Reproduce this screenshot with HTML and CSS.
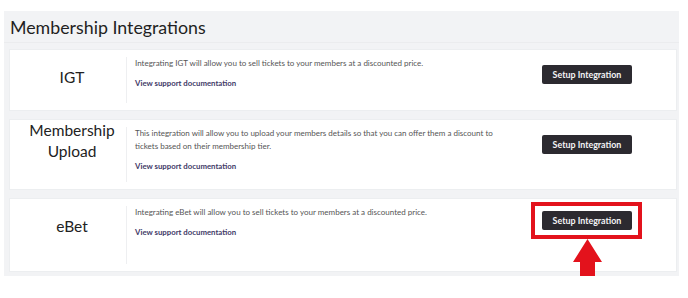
FILE: index.html
```html
<!DOCTYPE html>
<html lang="en">
<head>
    <meta charset="UTF-8">
    <meta name="viewport" content="width=device-width, initial-scale=1.0">
    <title>Membership Integrations</title>
    <link rel="stylesheet" href="styles.css">
</head>
<body>
    <div class="panel">
        <div class="panel-header">
            <h1>Membership Integrations</h1>
        </div>

        <div class="card-list">
            <!-- IGT -->
            <div class="card card-short">
                <div class="card-name">IGT</div>
                <div class="card-body">
                    <p class="card-text">Integrating IGT will allow you to sell tickets to your members at a discounted price.</p>
                    <a class="card-link" href="#">View support documentation</a>
                </div>
                <div class="card-action">
                    <button class="setup-btn">Setup Integration</button>
                </div>
            </div>

            <!-- Membership Upload -->
            <div class="card card-mid">
                <div class="card-name card-name-two">Membership Upload</div>
                <div class="card-body">
                    <p class="card-text">This integration will allow you to upload your members details so that you can offer them a discount to tickets based on their membership tier.</p>
                    <a class="card-link" href="#">View support documentation</a>
                </div>
                <div class="card-action">
                    <button class="setup-btn">Setup Integration</button>
                </div>
            </div>

            <!-- eBet -->
            <div class="card card-tall">
                <div class="card-name">eBet</div>
                <div class="card-body">
                    <p class="card-text">Integrating eBet will allow you to sell tickets to your members at a discounted price.</p>
                    <a class="card-link" href="#">View support documentation</a>
                </div>
                <div class="card-action">
                    <div class="highlight">
                        <button class="setup-btn">Setup Integration</button>
                        <span class="highlight-box"></span>
                        <svg class="highlight-arrow" width="29" height="47" viewBox="0 0 29 47">
                            <polygon points="14.5,0 29,23 22,23 22,47 7,47 7,23 0,23" fill="#e3121c"/>
                        </svg>
                    </div>
                </div>
            </div>
        </div>
    </div>
</body>
</html>
```

FILE: styles.css
```css
body {
    margin: 0;
    font-family: Lato, "Open Sans", Arial, sans-serif;
    background-color: #fff;
    color: #222;
}
.panel {
    margin: 11px 9px 0 4px;
    background-color: #f2f3f5;
    padding-bottom: 4px;
}
.panel-header {
    height: 31px;
    padding-left: 6px;
    border-bottom: 1px solid #ebecee;
    display: flex;
    align-items: center;
}
.panel-header h1 {
    margin: 0;
    font-size: 17.8px;
    font-weight: 400;
    color: #1f1f22;
}
.card-list {
    display: flex;
    flex-direction: column;
    gap: 8px;
    padding: 6px 2px 0 5px;
}
.card {
    display: flex;
    background-color: #fff;
    border: 1px solid #eceef0;
    padding: 7px 0;
    box-sizing: border-box;
}
.card-short {
    height: 62px;
}
.card-mid {
    height: 71px;
}
.card-tall {
    height: 74px;
}
.card-name {
    width: 108px;
    margin-left: 8px;
    height: 40px;
    display: flex;
    align-items: center;
    justify-content: center;
    text-align: center;
    font-size: 15.5px;
    line-height: 21px;
    color: #222;
}
.card-name-two {
    margin-top: -6px;
}
.card-body {
    flex: 1;
    border-left: 1px solid #eeeff1;
    padding-left: 8px;
}
.card-text {
    margin: 0;
    max-width: 360px;
    font-size: 8px;
    line-height: 13px;
    color: #555;
}
.card-link {
    display: inline-block;
    margin-top: 3px;
    font-size: 7.8px;
    line-height: 13px;
    font-weight: 700;
    color: #3f3a68;
    text-decoration: none;
}
.card-action {
    width: 134px;
    padding-top: 5px;
}
.setup-btn {
    width: 90px;
    height: 19px;
    padding: 0;
    border: none;
    border-radius: 2px;
    background-color: #2c2a30;
    color: #f4f4f6;
    font-family: Lato, "Open Sans", Arial, sans-serif;
    font-size: 8.9px;
    font-weight: 700;
    cursor: pointer;
}
.highlight {
    position: relative;
    width: 90px;
    height: 19px;
}
.highlight .setup-btn {
    display: block;
}
.highlight-box {
    position: absolute;
    top: -9px;
    left: -11px;
    right: -10px;
    bottom: -9px;
    border: 4px solid #e3121c;
}
.highlight-arrow {
    position: absolute;
    top: 28px;
    left: 31px;
}
```
